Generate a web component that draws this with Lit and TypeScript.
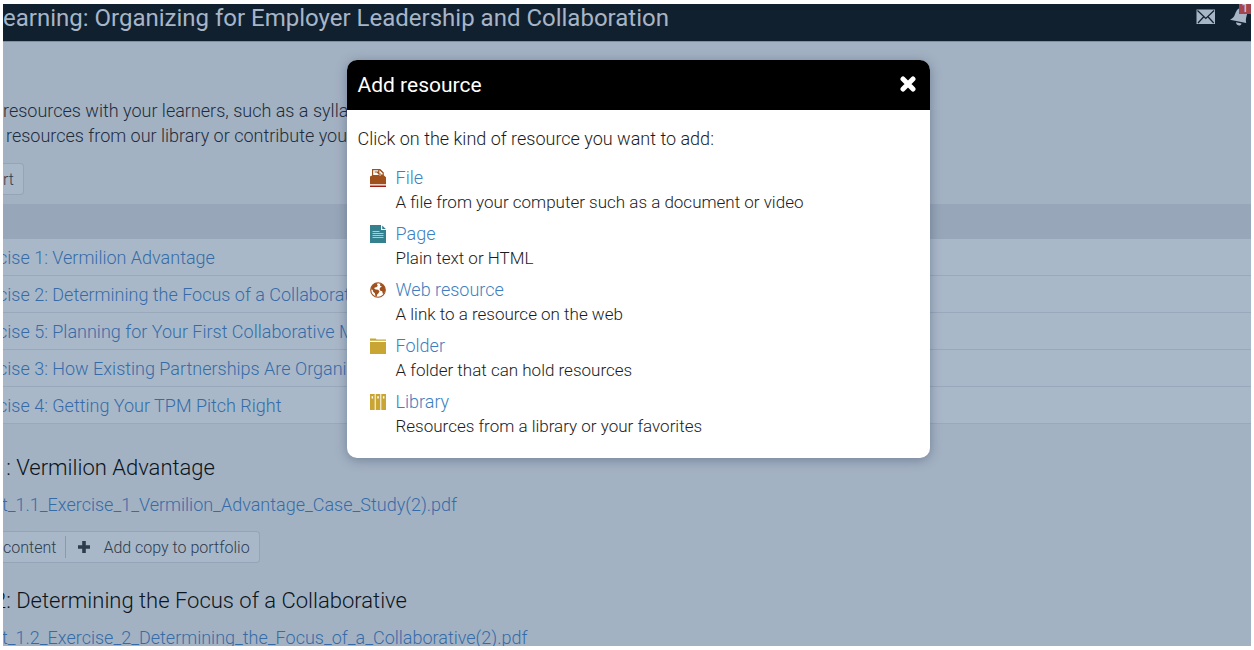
import { LitElement, html, css, svg } from "lit";
import { customElement } from "lit/decorators.js";

const icons = {
  file: svg`
    <path fill="#a0501c" d="M2 6.500V0h8.200l3.600 3.600v2.600l2.200 2v7.300H0V7.500z"/>
    <path fill="#fff" d="M3.200 1.200h5v1.200h-3.600v1h2.200l2.200 2.600H3.200zM9.400 1.200l3.200 3v1.400h-1.400l-.4-1H9.400zM9.400 5.400h1.400v1H9.400z"/>
    <path fill="#fff" d="M0 15.500h16v.9H0z"/>
    <path fill="#a31c12" d="M0 16.400h16V18H0z"/>`,
  page: svg`
    <path fill="#35808f" d="M0 0h11v5h5v13H0z"/>
    <path fill="#35808f" d="M12.200.4 15.800 4h-3.600z"/>
    <path stroke="#a9cdd4" stroke-width="1" d="M2.500 6.500h7M2.500 8.500h11M2.500 10.500h11M2.500 12.500h11"/>`,
  web: svg`
    <circle cx="8" cy="9" r="7.300" fill="#fff" stroke="#a0501c" stroke-width="1.100"/>
    <path fill="#a0501c" d="M1 8.200c.4-3 2.400-5.400 5-6.300l1.700.5-.8 1.400 1 .9-1.600 1.500-1.600.3-.4 1.300 1.500.8 2.300.2 1.400 1.400-1 2-1.300 1.200-.5 2.300-1.300-.8-.5-2.700-1.700-1.400-.5-1.900zM9.300 2.200c2.700.5 4.800 2.300 5.500 4.700l.5 2.700-1.500 3.400-1.100-.4-.5-2.300-1.900-.5-.8-1.900 1-1.700 1.500-.4-1.900-1 .2-1z"/>`,
  folder: svg`
    <path fill="#c9a633" d="M0 1.400h5.600l1 1.200H16v1.200H0zM0 5h16v12H0z"/>`,
  library: svg`
    <path fill="#c9a633" d="M0 1h4.700v16H0zM5.700 1h4.600v16H5.700zM11.300 1H16v16h-4.700z"/>
    <path fill="#fff" d="M1.600 3.200h1.500v2.400H1.600zM7.300 3.200h1.500v2.400H7.300zM12.900 3.200h1.500v2.400h-1.500z"/>`,
};

const kinds = [
  { icon: icons.file, name: "File", text: "A file from your computer such as a document or video" },
  { icon: icons.page, name: "Page", text: "Plain text or HTML" },
  { icon: icons.web, name: "Web resource", text: "A link to a resource on the web" },
  { icon: icons.folder, name: "Folder", text: "A folder that can hold resources" },
  { icon: icons.library, name: "Library", text: "Resources from a library or your favorites" },
];

const exercises = [
  "cise 1: Vermilion Advantage",
  "cise 2: Determining the Focus of a Collaborative",
  "cise 5: Planning for Your First Collaborative Meeting",
  "cise 3: How Existing Partnerships Are Organized",
  "cise 4: Getting Your TPM Pitch Right",
];

@customElement("add-resource-dialog")
class AddResourceDialog extends LitElement {
  static styles = css`
    :host {
      display: block;
      width: 583px;
      max-width: 100%;
    }
    .dialog {
      overflow: hidden;
      border-radius: 10px;
      background: #fff;
      color: #1c1c1c;
      box-shadow: 0 2px 12px rgba(40, 55, 85, 0.4);
    }
    .head {
      display: flex;
      align-items: center;
      justify-content: space-between;
      height: 50px;
      padding: 0 13px 0 11px;
      background: #000;
      color: #fff;
    }
    h2 {
      margin: 0;
      font-size: 21px;
      font-weight: 400;
      line-height: 28px;
    }
    .close {
      display: flex;
      padding: 0;
      border: 0;
      background: none;
      color: #fff;
    }
    .body {
      padding: 17px 11px 20px;
    }
    p {
      margin: 0;
      font-size: 18px;
      line-height: 24px;
    }
    ul {
      display: grid;
      gap: 8px;
      margin: 15px 0 0;
      padding: 0 0 0 12px;
      list-style: none;
    }
    li {
      display: grid;
      grid-template-columns: 16px 1fr;
      column-gap: 10px;
      line-height: 24px;
    }
    .icon {
      margin-top: 3px;
    }
    a {
      color: #3d7fc1;
      font-size: 18px;
      text-decoration: none;
    }
    .text {
      grid-column: 2;
      font-size: 17px;
    }
  `;

  render() {
    return html`
      <section class="dialog" role="dialog" aria-labelledby="title">
        <header class="head">
          <h2 id="title">Add resource</h2>
          <button class="close" aria-label="Close">
            <svg width="18" height="18" viewBox="0 0 18 18">
              <path d="M4 3l10 10M14 3L4 13" stroke="currentColor" stroke-width="5" stroke-linecap="round" />
            </svg>
          </button>
        </header>
        <div class="body">
          <p>Click on the kind of resource you want to add:</p>
          <ul>
            ${kinds.map(
              (kind) => html`
                <li>
                  <svg class="icon" width="16" height="18" viewBox="0 0 16 18" aria-hidden="true">${kind.icon}</svg>
                  <a href="#">${kind.name}</a>
                  <span class="text">${kind.text}</span>
                </li>
              `,
            )}
          </ul>
        </div>
      </section>
    `;
  }
}

@customElement("app-root")
class AppRoot extends LitElement {
  static styles = css`
    :host {
      display: block;
      box-sizing: border-box;
      height: 100vh;
      padding: 4px 3px;
      background: #fff;
      font-family: Roboto, "Liberation Sans", sans-serif;
      font-weight: 300;
    }
    .frame {
      position: relative;
      height: 100%;
      overflow: hidden;
      background: #a3b2c3;
      color: #1e2c3c;
      font-size: 18px;
    }
    .bar {
      display: flex;
      justify-content: space-between;
      height: 38px;
      border-bottom: 1px solid #7f8ea3;
      box-sizing: border-box;
      background: #11202f;
      color: #a7b5c6;
    }
    h1 {
      margin: 0;
      font-size: 24px;
      font-weight: 400;
      line-height: 28px;
      white-space: nowrap;
    }
    .tools {
      display: flex;
      gap: 13px;
    }
    .tool {
      position: relative;
      display: flex;
      padding: 0;
      border: 0;
      background: none;
      color: inherit;
    }
    .badge {
      position: absolute;
      top: 0;
      right: 0;
      width: 12px;
      height: 10px;
      overflow: hidden;
      background: #a2454f;
      color: #d3c3cc;
      font: 500 12px/8px Roboto, sans-serif;
      text-align: center;
    }
    .intro {
      margin: 56px 0 0;
      line-height: 25px;
      white-space: nowrap;
    }
    .more {
      margin-left: 3px;
    }
    button {
      font: inherit;
    }
    .group {
      display: flex;
      width: max-content;
      height: 32px;
      box-sizing: border-box;
      border: 1px solid #95a4b6;
      border-left: 0;
      border-radius: 0 4px 4px 0;
      background: #a9b8c9;
    }
    .action {
      display: flex;
      align-items: center;
      gap: 12px;
      padding: 0 9px 0 0;
      border: 0;
      background: none;
      color: #2e3d4d;
      font-size: 16px;
    }
    .action + .action {
      margin: 4px 0;
      padding-left: 11px;
      border-left: 1px solid #8a99ab;
    }
    .import {
      margin-top: 15px;
    }
    table {
      width: 100%;
      margin-top: 9px;
      border-collapse: collapse;
    }
    th {
      height: 35px;
      padding: 0;
      background: #97a6b8;
    }
    td {
      height: 36px;
      padding: 0;
      border-bottom: 1px solid #99a9bb;
      background: #a9b8c9;
    }
    a {
      color: #356ca8;
      text-decoration: none;
      white-space: nowrap;
    }
    .rowlink {
      margin-left: -5px;
    }
    .lesson {
      padding-top: 30px;
    }
    .lesson + .lesson {
      padding-top: 24px;
    }
    h3 {
      margin: 0 0 0 -9px;
      color: #0b1520;
      font-size: 22px;
      font-weight: 300;
      line-height: 28px;
    }
    .doc {
      display: block;
      margin: 11px 0 14px -1px;
      line-height: 24px;
    }
    .overlay {
      position: absolute;
      inset: 56px 0 auto;
      display: flex;
      justify-content: center;
      padding-left: 22px;
    }
  `;

  render() {
    return html`
      <div class="frame">
        <header class="bar">
          <h1>earning: Organizing for Employer Leadership and Collaboration</h1>
          <div class="tools">
            <button class="tool" aria-label="Messages">
              <svg width="20" height="26" viewBox="0 0 20 26">
                <path fill="currentColor" d="M.5 5.500h18.500V20H.5z" />
                <path fill="none" stroke="#11202f" stroke-width="1.200" d="M1.500 6.500l8.300 8 8.300-8M2 19l5.500-6M17.700 19l-5.500-6" />
              </svg>
            </button>
            <button class="tool" aria-label="Notifications">
              <svg width="22" height="26" viewBox="0 0 22 26">
                <path fill="currentColor" d="M10 4.500c2-1 7 .2 8 2.500.7 2-.4 4.500-.8 6.500-.4 1.700-.4 3.300 0 5.500L1 15.800c2.500-1.300 3.700-2.500 4.500-4.300.9-2 1.800-6 4.500-7zM7 18.200l5.600 1.200c-.9 3.400-5.200 2.500-5.600-1.200z" />
              </svg>
              <span class="badge">1</span>
            </button>
          </div>
        </header>

        <main>
          <p class="intro">
            resources with your learners, such as a syllabus<br />
            <span class="more">resources from our library or contribute your own</span>
          </p>
          <div class="group import"><button class="action">rt</button></div>

          <table>
            <thead>
              <tr><th></th></tr>
            </thead>
            <tbody>
              ${exercises.map((name) => html`<tr><td><a class="rowlink" href="#">${name}</a></td></tr>`)}
            </tbody>
          </table>

          <section class="lesson">
            <h3>1: Vermilion Advantage</h3>
            <a class="doc" href="#">t_1.1_Exercise_1_Vermilion_Advantage_Case_Study(2).pdf</a>
            <div class="group">
              <button class="action">content</button>
              <button class="action">
                <svg width="14" height="14" viewBox="0 0 14 14" aria-hidden="true">
                  <path d="M7 1v12M1 7h12" stroke="currentColor" stroke-width="3.600" />
                </svg>
                Add copy to portfolio
              </button>
            </div>
          </section>
          <section class="lesson">
            <h3>2: Determining the Focus of a Collaborative</h3>
            <a class="doc" href="#">t_1.2_Exercise_2_Determining_the_Focus_of_a_Collaborative(2).pdf</a>
          </section>
        </main>

        <div class="overlay"><add-resource-dialog></add-resource-dialog></div>
      </div>
    `;
  }
}
